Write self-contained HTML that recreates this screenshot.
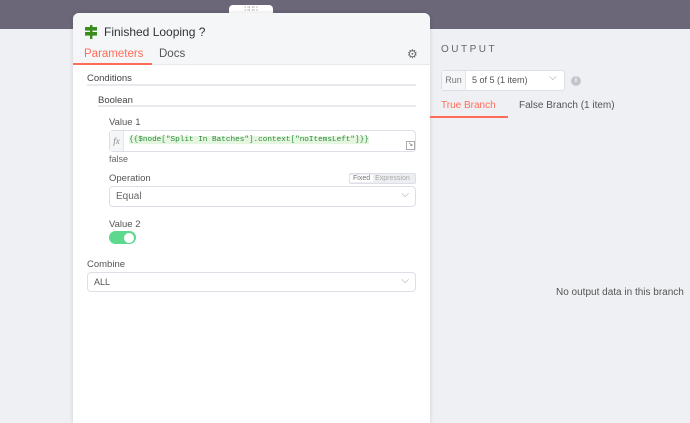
<!DOCTYPE html>
<html><head><style>
*{margin:0;padding:0;box-sizing:border-box}
body{width:690px;height:416px;overflow:hidden;background:#eff0f3;font-family:"Liberation Sans",sans-serif;position:relative;color:#555}
.top{position:absolute;left:0;top:0;width:690px;height:29px;background:#6b6779}
.panel{position:absolute;left:73px;top:13px;width:357px;height:410px;background:#fff;border-radius:6px 6px 0 0;box-shadow:0 0 4px rgba(0,0,0,.15)}
.head{height:52px;background:#f5f6f8;border-radius:6px 6px 0 0;position:relative;border-bottom:1px solid #e8e9ec}
.abs{position:absolute;white-space:nowrap}
.line{position:absolute;height:2px;background:#e9eaed}
.in{position:absolute;border:1px solid #dcdfe6;border-radius:4px;background:#fff;font-size:10px;color:#555}
</style></head><body>
<div class="top"></div>
<div class="abs" style="left:229px;top:5px;width:44px;height:10px;background:#fff;border-radius:4px 4px 0 0;font-size:7px;color:#666;text-align:center;line-height:9px">∷∷∷</div>
<div class="panel">
 <div class="head">
  <svg class="abs" style="left:11px;top:12px" width="14" height="14" viewBox="0 0 14 14"><rect x="6" y="0" width="2.4" height="14" fill="#3a8c1f"/><rect x="1" y="2" width="12" height="3.6" fill="#3a8c1f"/><rect x="1" y="7" width="12" height="3.6" fill="#3a8c1f"/></svg>
  <div class="abs" style="left:31px;top:12px;font-size:12px;color:#333">Finished Looping ?</div>
  <div class="abs" style="left:11px;top:35px;font-size:11.5px;color:#ff6d5a">Parameters</div>
  <div class="abs" style="left:0;top:50px;width:79px;height:2px;background:#ff6d5a"></div>
  <div class="abs" style="left:86px;top:35px;font-size:11.5px;color:#555">Docs</div>
  <div class="abs" style="left:334px;top:34px;font-size:12px;color:#666">⚙</div>
 </div>
 <div class="abs" style="left:14px;top:60px;font-size:9.5px;color:#444">Conditions</div>
 <div class="line" style="left:14px;top:71px;width:329px"></div>
 <div class="abs" style="left:25px;top:82px;font-size:9.5px;color:#444">Boolean</div>
 <div class="line" style="left:25px;top:92px;width:318px"></div>
 <div class="abs" style="left:36px;top:104px;font-size:9.5px;color:#555">Value 1</div>
 <div class="in" style="left:36px;top:117px;width:307px;height:22px;background:#fff">
  <div class="abs" style="left:0;top:0;width:14px;height:20px;background:#f5f6f8;border-right:1px solid #e3e5ea;font-family:'Liberation Serif',serif;font-style:italic;font-size:9px;color:#888;text-align:center;line-height:20px">fx</div>
  <div class="abs" style="left:19px;top:5px;font-family:'Liberation Mono',monospace;font-size:7.7px;color:#2e8b3c;background:#e4f5e0">{{$node["Split In Batches"].context["noItemsLeft"]}}</div>
  <div class="abs" style="left:296px;top:10px;width:9px;height:9px;border:1px solid #aaa;font-size:6px;line-height:7px;text-align:center;color:#666">↘</div>
 </div>
 <div class="abs" style="left:36px;top:141px;font-size:9px;color:#666">false</div>
 <div class="abs" style="left:36px;top:160px;font-size:9.5px;color:#555">Operation</div>
 <div class="abs" style="left:276px;top:160px;width:67px;height:11px;border:1px solid #dcdfe6;border-radius:2px;background:#eceef1;font-size:7px;line-height:9px"><span style="background:#fff;color:#777;padding:0 3px">Fixed</span><span style="color:#aaa;padding-left:2px">Expression</span></div>
 <div class="in" style="left:36px;top:173px;width:307px;height:21px"><span class="abs" style="left:6px;top:4px;color:#666">Equal</span><span class="abs" style="right:6px;top:2px;color:#999">⌵</span></div>
 <div class="abs" style="left:36px;top:206px;font-size:9.5px;color:#555">Value 2</div>
 <div class="abs" style="left:36px;top:218px;width:27px;height:13px;border-radius:7px;background:#5fd88f"><div class="abs" style="left:15px;top:1.5px;width:10px;height:10px;border-radius:50%;background:#fff"></div></div>
 <div class="abs" style="left:14px;top:246px;font-size:9.5px;color:#555">Combine</div>
 <div class="in" style="left:14px;top:259px;width:329px;height:20px"><span class="abs" style="left:6px;top:4px;color:#555;font-size:9px">ALL</span><span class="abs" style="right:6px;top:2px;color:#999">⌵</span></div>
</div>
<div class="abs" style="left:441px;top:44px;font-size:10px;letter-spacing:2.5px;color:#666">OUTPUT</div>
<div class="abs" style="left:441px;top:70px;width:124px;height:21px;border:1px solid #dcdfe6;border-radius:3px;background:#fff;font-size:9px">
 <div class="abs" style="left:0;top:0;width:24px;height:19px;background:#f5f6f8;border-right:1px solid #e3e5ea;color:#777;line-height:19px;text-align:center">Run</div>
 <div class="abs" style="left:30px;top:4px;color:#555">5 of 5 (1 item)</div>
 <div class="abs" style="left:107px;top:1px;color:#999;font-size:10px">⌵</div>
</div>
<div class="abs" style="left:571px;top:76px;width:10px;height:10px;border-radius:50%;background:#c4c6cc;color:#fff;font-size:7px;text-align:center;line-height:10px;font-weight:bold">i</div>
<div class="abs" style="left:441px;top:100px;font-size:10px;color:#ff6d5a">True Branch</div>
<div class="abs" style="left:430px;top:116px;width:78px;height:2px;background:#ff6d5a"></div>
<div class="abs" style="left:519px;top:100px;font-size:10px;color:#555">False Branch (1 item)</div>
<div class="abs" style="left:556px;top:287px;font-size:10px;color:#555">No output data in this branch</div>
</body></html>
